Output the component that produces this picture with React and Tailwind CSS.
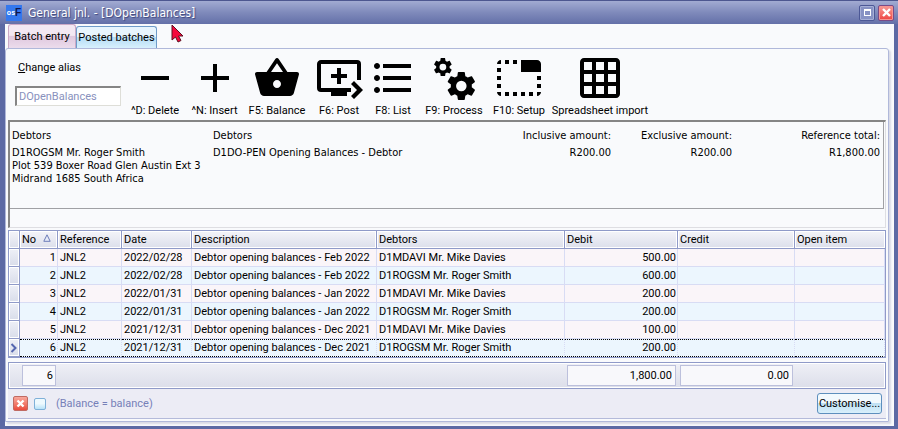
import React from "react";
import {
  MdRemove,
  MdAdd,
  MdShoppingBasket,
  MdQueuePlayNext,
  MdFormatListBulleted,
  MdTabUnselected,
  MdGridOn,
} from "react-icons/md";

const UI = "font-['Roboto','Liberation_Sans',sans-serif] text-[11px] leading-[14px]";
const TAHOMA = "font-['DejaVu_Sans_Condensed','Noto_Sans',sans-serif]";

const GEAR =
  "M19.14 12.94c.04-.3.06-.61.06-.94 0-.32-.02-.64-.07-.94l2.03-1.58c.18-.14.23-.41.12-.61l-1.92-3.32c-.12-.22-.37-.29-.59-.22l-2.39.96c-.5-.38-1.03-.7-1.62-.94L14.4 2.81c-.04-.24-.24-.41-.48-.41h-3.84c-.24 0-.43.17-.47.41L9.25 5.35c-.59.24-1.13.57-1.62.94L5.24 5.33c-.22-.08-.47 0-.59.22L2.74 8.87c-.12.21-.08.47.12.61l2.03 1.58c-.05.3-.09.63-.09.94s.02.64.07.94l-2.03 1.58c-.18.14-.23.41-.12.61l1.92 3.32c.12.22.37.29.59.22l2.39-.96c.5.38 1.03.7 1.62.94l.36 2.54c.05.24.24.41.48.41h3.84c.24 0 .44-.17.47-.41l.36-2.54c.59-.24 1.13-.56 1.62-.94l2.39.96c.22.08.47 0 .59-.22l1.92-3.32c.12-.22.07-.47-.12-.61l-2.01-1.58zM12 15.6a3.6 3.6 0 1 1 0-7.2 3.6 3.6 0 0 1 0 7.2z";

function Gears() {
  return (
    <svg viewBox="0 0 24 24" className="size-12" aria-hidden="true">
      <path fillRule="evenodd" transform="translate(0.8 0.9) scale(0.47)" d={GEAR} />
      <path fillRule="evenodd" transform="translate(6.9 7.2) scale(0.73)" d={GEAR} />
    </svg>
  );
}

const tools = [
  { label: "^D: Delete", icon: <MdRemove className="size-12" />, width: "w-15" },
  { label: "^N: Insert", icon: <MdAdd className="size-12" />, width: "w-[59px]" },
  { label: "F5: Balance", icon: <MdShoppingBasket className="size-12" />, width: "w-[66px]" },
  { label: "F6: Post", icon: <MdQueuePlayNext className="size-12" />, width: "w-[58px]" },
  { label: "F8: List", icon: <MdFormatListBulleted className="size-12" />, width: "w-[50px]" },
  { label: "F9: Process", icon: <Gears />, width: "w-[72px]" },
  { label: "F10: Setup", icon: <MdTabUnselected className="size-12" />, width: "w-[58px]" },
  { label: "Spreadsheet import", icon: <MdGridOn className="size-12" />, width: "w-[104px]" },
];

const rows = [
  ["2022/02/28", "Feb 2022", "D1MDAVI Mr. Mike Davies", "500.00"],
  ["2022/02/28", "Feb 2022", "D1ROGSM Mr. Roger Smith", "600.00"],
  ["2022/01/31", "Jan 2022", "D1MDAVI Mr. Mike Davies", "200.00"],
  ["2022/01/31", "Jan 2022", "D1ROGSM Mr. Roger Smith", "200.00"],
  ["2021/12/31", "Dec 2021", "D1MDAVI Mr. Mike Davies", "100.00"],
  ["2021/12/31", "Dec 2021", "D1ROGSM Mr. Roger Smith", "200.00"],
];

const headers = ["", "No", "Reference", "Date", "Description", "Debtors", "Debit", "Credit", "Open item"];

function TitleBar() {
  return (
    <header className="flex h-6 items-center border-t border-[#4d5790] bg-linear-to-b from-[#a2abd2] via-[#7f8abb] to-[#6470a8] pr-1 pl-1.5">
      <span className="flex size-4 items-center justify-center bg-[#3478ee] font-['Liberation_Sans'] text-[7px] leading-none font-bold text-white">
        os<span className="text-[10px] text-[#10164a]">F</span>
      </span>
      <h1 className={`${TAHOMA} ml-1.5 flex-1 text-[12px] leading-4 text-white [text-shadow:1px_1px_1px_#3d467c]`}>
        General jnl. - [DOpenBalances]
      </h1>
      <button
        aria-label="Maximise"
        className="mr-[3px] flex size-4 items-center justify-center rounded-[2px] border border-[#4c5896] bg-[#8792c4] inset-ring inset-ring-[#a5aed6]"
      >
        <span className="h-[7px] w-[7px] border border-t-2 border-white" />
      </button>
      <button
        aria-label="Close"
        className="flex size-4 items-center justify-center rounded-[2px] border border-[#7a4a86] bg-linear-to-b from-[#f59a98] to-[#ee4040] inset-ring inset-ring-[#f59490]"
      >
        <svg viewBox="0 0 9 9" className="size-[9px]" aria-hidden="true">
          <path d="M1 1l7 7M8 1l-7 7" stroke="#fff" strokeWidth="2.4" />
        </svg>
      </button>
    </header>
  );
}

function Tabs() {
  return (
    <nav className={`${UI} relative flex h-6 items-end pl-[3px] whitespace-nowrap`}>
      <button className="h-6 w-[68px] rounded-t-[3px] border border-b-0 border-[#cba9c6] bg-linear-to-b from-[#f3e8f2] from-45% via-[#dfc8de] via-50% to-[#ecdcec] text-black">
        Batch entry
      </button>
      <button className="h-[22px] w-[81px] rounded-t-[3px] border border-b-0 border-[#6f9cc9] bg-linear-to-b from-[#e8f5fd] from-45% via-[#b4dcf5] via-50% to-[#d8f0fd] text-black">
        Posted batches
      </button>
      <svg viewBox="0 0 13 19" className="absolute top-0 left-[166px] h-[19px] w-[13px]" aria-hidden="true">
        <path d="M1 1v15l3.5-3 2.5 5 3-1.5-2.5-4.5H12z" fill="#f5083c" stroke="#5b1020" strokeWidth="1" />
      </svg>
    </nav>
  );
}

function Toolbar() {
  return (
    <div className={`${UI} flex h-[69px]`}>
      <div className="flex w-[117px] flex-col pt-2.5 pl-[7px]">
        <label htmlFor="alias" className="pl-[3px]">
          <u>C</u>hange alias
        </label>
        <input
          id="alias"
          defaultValue="DOpenBalances"
          className="mt-[11px] h-5 w-[106px] border-t-2 border-r border-b border-l-2 border-t-[#858585] border-r-[#deded8] border-b-[#deded8] border-l-[#858585] bg-white px-0.5 text-[#8891bd] outline-none"
        />
      </div>
      {tools.map((t) => (
        <button key={t.label} className={`${t.width} flex flex-col items-center pt-[3px] whitespace-nowrap text-black`}>
          {t.icon}
          <span className="mt-0.5">{t.label}</span>
        </button>
      ))}
    </div>
  );
}

function Details() {
  return (
    <section className="border-t-2 border-r border-b border-l-2 border-t-[#858585] border-r-[#dedee2] border-b-[#dedee2] border-l-[#858585] pr-px pb-[18px]">
      <div
        className={`${TAHOMA} flex h-[87px] border-r border-b border-[#a0a0a4] pt-[7px] pr-[3px] pl-0.5 text-[11px] leading-[13px] whitespace-nowrap text-black`}
      >
        <div className="w-[201px]">
          <p className="mb-1">Debtors</p>
          <p>D1ROGSM Mr. Roger Smith</p>
          <p>Plot 539 Boxer Road Glen Austin Ext 3</p>
          <p>Midrand 1685 South Africa</p>
        </div>
        <div className="flex-1">
          <p className="mb-1">Debtors</p>
          <p>D1DO-PEN Opening Balances - Debtor</p>
        </div>
        <div className="text-right">
          <p className="mb-1">Inclusive amount:</p>
          <p>R200.00</p>
        </div>
        <div className="w-[121px] text-right">
          <p className="mb-1">Exclusive amount:</p>
          <p>R200.00</p>
        </div>
        <div className="w-[148px] text-right">
          <p className="mb-1">Reference total:</p>
          <p>R1,800.00</p>
        </div>
      </div>
    </section>
  );
}

function Grid() {
  return (
    <table className={`${UI} mt-0.5 w-full table-fixed border-separate border-spacing-0 border border-[#8f9ac8] text-black`}>
      <colgroup>
        <col className="w-[11px]" />
        <col className="w-[38px]" />
        <col className="w-16" />
        <col className="w-[70px]" />
        <col className="w-[185px]" />
        <col className="w-[188px]" />
        <col className="w-[113px]" />
        <col className="w-[117px]" />
        <col />
      </colgroup>
      <thead>
        <tr>
          {headers.map((h, i) => (
            <th
              key={i}
              className="h-[18px] border-r border-b border-[#8f9ac8] bg-linear-to-b from-[#f4f4f9] to-[#dcdfeb] p-0 pl-0.5 text-left font-normal inset-ring inset-ring-white last:border-r-0"
            >
              {h}
              {h === "No" && (
                <svg viewBox="0 0 8 8" className="ml-[7px] inline size-2 -translate-y-0.5" aria-hidden="true">
                  <path d="M4 .8L7.2 7.3H.8z" fill="#e8ecf8" stroke="#6c7cb8" />
                </svg>
              )}
            </th>
          ))}
        </tr>
      </thead>
      <tbody>
        {rows.map(([date, month, debtor, debit], i) => {
          const current = i === rows.length - 1;
          const cell = current
            ? "h-[18px] border-r border-y border-y-black border-dotted border-r-[#d8dcf4] bg-[#ecf6fe] pr-px pl-0.5 whitespace-nowrap"
            : `h-[18px] border-r border-b border-[#d8dcf4] pr-px pl-0.5 whitespace-nowrap ${i % 2 ? "bg-[#ecf6fe]" : "bg-[#faf5f9]"}`;
          return (
            <tr key={i}>
              <td className="border-r border-b border-[#8f9ac8] bg-linear-to-b from-[#eef0f7] to-[#d9ddea] p-0 inset-ring inset-ring-white">
                {current && (
                  <svg viewBox="0 0 10 10" className="size-[10px]" aria-label="Current row">
                    <path d="M2.5 1l4 4-4 4" fill="none" stroke="#5566b0" strokeWidth="2" />
                  </svg>
                )}
              </td>
              <td className={`${cell} text-right`}>{i + 1}</td>
              <td className={cell}>JNL2</td>
              <td className={cell}>{date}</td>
              <td className={cell}>Debtor opening balances - {month}</td>
              <td className={cell}>{debtor}</td>
              <td className={`${cell} text-right`}>{debit}</td>
              <td className={cell} />
              <td className={cell} />
            </tr>
          );
        })}
      </tbody>
    </table>
  );
}

const totalBox = "flex h-[21px] items-center justify-end border border-[#bcc0dc] bg-[#f8f8fb]";

function Totals() {
  return (
    <div
      className={`${UI} mt-1 flex h-[27px] items-center border border-[#8f9ac8] bg-linear-to-b from-[#eff0f6] to-[#dcdeea] pl-[13px] inset-ring inset-ring-white`}
    >
      <output className={`${totalBox} w-[34px] pr-0.5`}>6</output>
      <output className={`${totalBox} ml-[511px] w-[109px] pr-[3px]`}>1,800.00</output>
      <output className={`${totalBox} ml-1 w-[113px] pr-[3px]`}>0.00</output>
    </div>
  );
}

function StatusBar() {
  return (
    <footer className={`${UI} flex h-[30px] items-center border-b border-[#b4bada] bg-[#ececf5] pr-1 pl-[5px]`}>
      <button
        aria-label="Clear filter"
        className="flex size-[15px] items-center justify-center rounded-[2px] border border-[#c06a62] bg-linear-to-b from-[#f8a79c] to-[#e8493c]"
      >
        <svg viewBox="0 0 9 9" className="size-[9px]" aria-hidden="true">
          <path d="M1.5 1.5l6 6M7.5 1.5l-6 6" stroke="#fff" strokeWidth="2.4" />
        </svg>
      </button>
      <input
        type="checkbox"
        id="filter"
        className="ml-1.5 size-3 appearance-none rounded-[2px] border border-[#7fb0d8] bg-linear-to-b from-[#eef9fe] from-45% to-[#b8e2f8]"
      />
      <label htmlFor="filter" className="ml-[10px] flex-1 text-[#7680b8]">
        (Balance = balance)
      </label>
      <button className="h-[21px] w-[65px] rounded-[3px] border border-[#5d8fbd] bg-linear-to-b from-[#f2f9fd] from-45% via-[#bfe0f3] via-50% to-[#d8f0fb] whitespace-nowrap text-black">
        Customise...
      </button>
    </footer>
  );
}

export default function App() {
  return (
    <main className="flex min-h-screen flex-col bg-[#5c69a4]">
      <TitleBar />
      <div className="mr-1 mb-1 ml-[5px] flex flex-1 flex-col bg-[#f9fafc] pr-1 pb-1">
        <Tabs />
        <div className="mr-px flex flex-1 flex-col rounded-t-[3px] border border-[#b0b8da] p-0.5 shadow-[2px_2px_2px_#d8dae6]">
          <Toolbar />
          <Details />
          <Grid />
          <Totals />
          <StatusBar />
        </div>
      </div>
    </main>
  );
}
